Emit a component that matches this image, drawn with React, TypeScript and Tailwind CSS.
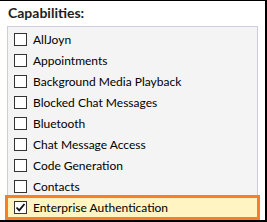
const CAPABILITIES = [
  'AllJoyn',
  'Appointments',
  'Background Media Playback',
  'Blocked Chat Messages',
  'Bluetooth',
  'Chat Message Access',
  'Code Generation',
  'Contacts',
];

function CheckBox({ checked }: { checked?: boolean }) {
  return (
    <span className="flex h-[13px] w-[13px] shrink-0 items-center justify-center border border-[#333333] bg-white">
      {checked && (
        <svg width="11" height="11" viewBox="0 0 11 11" aria-hidden="true">
          <polyline
            points="1.5,5.5 4.2,8.3 9.5,2"
            fill="none"
            stroke="#111111"
            strokeWidth="1.8"
          />
        </svg>
      )}
    </span>
  );
}

export default function App() {
  return (
    <div
      className="flex h-[222px] w-[267px] flex-col border-t border-r-2 border-b-2 border-black bg-white text-[#000000]"
      style={{ fontFamily: 'Lato, "Noto Sans", sans-serif' }}
    >
      <div className="h-[25px] pl-[8px] pt-[3px] text-[14px] font-bold leading-[18px] text-[#1e1e1e]">
        Capabilities:
      </div>
      <div className="ml-[7px] mr-[7px] flex flex-1 flex-col border border-b-0 border-[#cdcde0] bg-[#f4f4f4] pt-[2px]">
        {CAPABILITIES.map((name) => (
          <div key={name} className="flex h-[21px] items-center gap-[6px] pl-[6px] text-[12px] whitespace-nowrap">
            <CheckBox />
            <span>{name}</span>
          </div>
        ))}
        <div className="-mx-[3px] -mt-[2px] flex h-[25px] items-center gap-[6px] border-[3px] border-[#f58025] bg-[#fff4c2] pl-[6px] text-[12px] whitespace-nowrap">
          <CheckBox checked />
          <span>Enterprise Authentication</span>
        </div>
      </div>
    </div>
  );
}
